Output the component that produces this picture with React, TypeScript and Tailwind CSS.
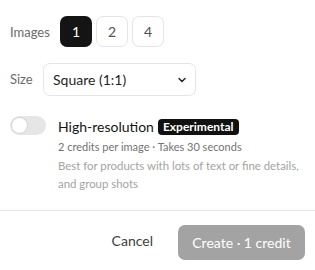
import { useState } from "react";

export default function App() {
  const [count, setCount] = useState(1);
  const [hiRes, setHiRes] = useState(false);

  return (
    <div className="w-[315px] h-[270px] bg-white text-[#171717] font-['Lato','Open_Sans',sans-serif] flex flex-col">
      <div className="px-[10px] pt-[16px] flex flex-col">
        <div className="flex items-center">
          <span className="text-[13px] text-[#6b6b6b] w-[50px] mt-[2px]">Images</span>
          <div className="flex gap-[4px]">
            {[1, 2, 4].map((n) => (
              <button
                key={n}
                onClick={() => setCount(n)}
                className={
                  n === count
                    ? "w-[32px] h-[31px] rounded-[7px] bg-[#141414] text-white text-[14px]"
                    : "w-[32px] h-[31px] rounded-[7px] border border-[#e5e5e5] bg-white text-[#525252] text-[14px]"
                }
              >
                {n}
              </button>
            ))}
          </div>
        </div>

        <div className="flex items-center mt-[16px]">
          <span className="text-[13px] text-[#6b6b6b] w-[33px]">Size</span>
          <div className="w-[153px] h-[33px] rounded-[7px] border border-[#e5e5e5] flex items-center justify-between pl-[9px] pr-[8px]">
            <span className="text-[14px] text-[#1f1f1f]">Square (1:1)</span>
            <svg width="10" height="10" viewBox="0 0 10 10" fill="none">
              <path d="M2 3.5 L5 6.5 L8 3.5" stroke="#262626" strokeWidth="1.5" strokeLinecap="round" strokeLinejoin="round" />
            </svg>
          </div>
        </div>

        <div className="flex mt-[19px]">
          <button
            onClick={() => setHiRes(!hiRes)}
            className="w-[36px] h-[19px] rounded-full bg-[#e6e6e6] relative shrink-0 mt-[1px]"
          >
            <span className="absolute left-[1px] top-[1px] w-[17px] h-[17px] rounded-full bg-white border border-[#d4d4d4]" />
          </button>
          <div className="ml-[12px] flex flex-col">
            <div className="flex items-center gap-[4px] mt-[1px]">
              <span className="text-[14px] text-[#141414]">High-resolution</span>
              <span className="bg-[#111] text-white text-[12px] font-bold rounded-[4px] px-[5px] leading-[16px]">Experimental</span>
            </div>
            <span className="text-[11px] text-[#737373] mt-[3px] leading-[14px]">2 credits per image · Takes 30 seconds</span>
            <span className="text-[11.4px] text-[#a3a3a3] mt-[3px] leading-[18px]">
              Best for products with lots of text or fine details,
              <br />
              and group shots
            </span>
          </div>
        </div>
      </div>

      <div className="mt-auto border-t border-[#e5e5e5] h-[60px] flex items-center justify-end pr-[10px] gap-[25px]">
        <button className="text-[14px] text-[#404040]">Cancel</button>
        <button className="w-[127px] h-[35px] rounded-[7px] bg-[#a3a3a3] text-white text-[14px] mt-[3px]">
          Create · 1 credit
        </button>
      </div>
    </div>
  );
}
